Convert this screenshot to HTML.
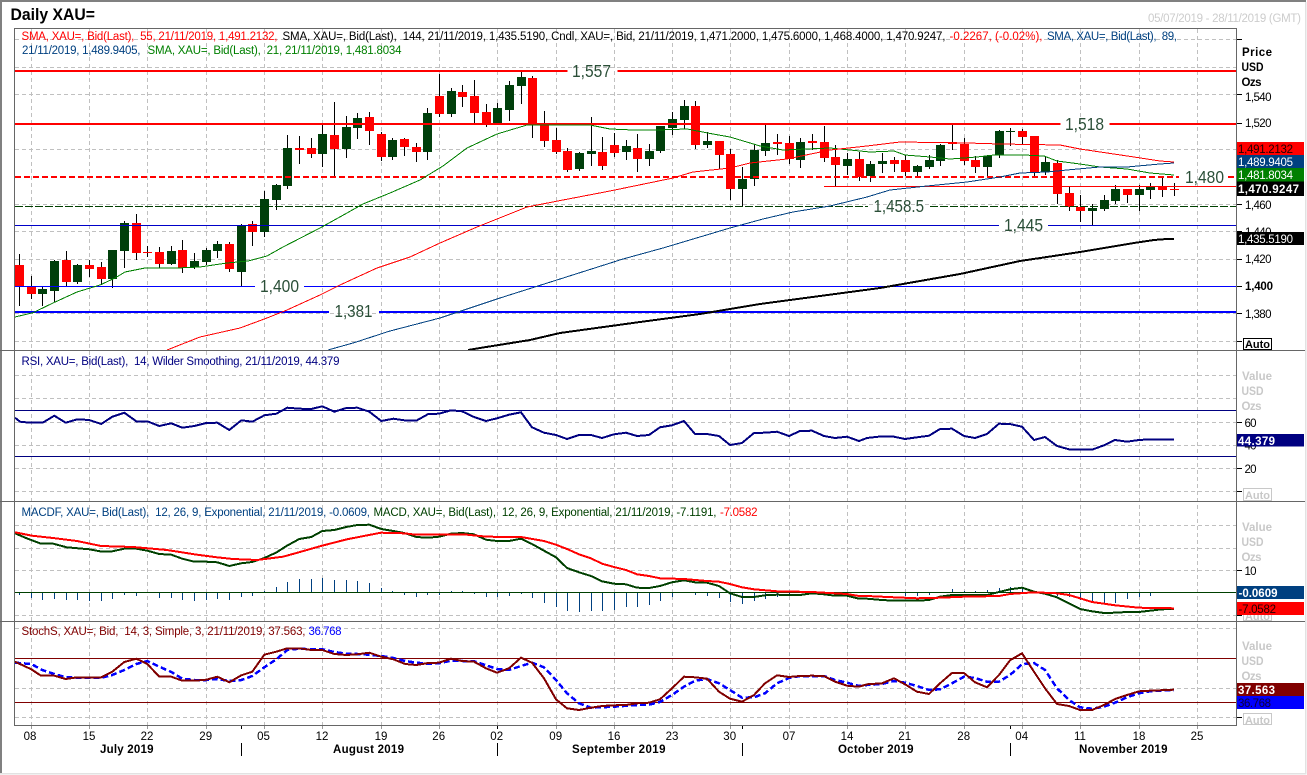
<!DOCTYPE html>
<html><head><meta charset="utf-8"><title>Daily XAU=</title>
<style>
html,body{margin:0;padding:0;background:#fff;width:1307px;height:775px;overflow:hidden}
svg{display:block}
text{font-family:"Liberation Sans",Arial,sans-serif;font-size:11.5px;white-space:pre}
.b{font-weight:bold}
.g{fill:#c8c8c8;font-weight:bold;font-size:11.5px}
.l{font-size:17.5px;fill:#2b4f38}
.p{fill:none;shape-rendering:crispEdges}
.pl{fill:none;stroke-linejoin:round}
</style></head><body>
<svg xmlns="http://www.w3.org/2000/svg" width="1307" height="775" viewBox="0 0 1307 775">
<defs><clipPath id="c"><rect x="15" y="29" width="1221" height="321"/></clipPath></defs>
<rect width="1307" height="775" fill="#fff"/>
<!-- outer frame -->
<path class="p" stroke="#808080" stroke-width="2" d="M0 1H1306M1 0V773"/>
<path class="p" stroke="#e2e2e2" stroke-width="1.5" d="M1305.5 2V773.5H0"/>
<text x="10.5" y="20" class="b" style="font-size:16.5px" textLength="84.5" lengthAdjust="spacingAndGlyphs" fill="#000">Daily XAU=</text>
<text x="1148" y="22" fill="#cccccc" textLength="153">05/07/2019 - 28/11/2019 (GMT)</text>
<!-- grid -->
<path class="p" stroke="#c0c0c0" stroke-dasharray="4 3" d="M31.5 29V725M89.5 29V725M147.5 29V725M206.5 29V725M264.5 29V725M322.5 29V725M381.5 29V725M439.5 29V725M497.5 29V725M556.5 29V725M614.5 29V725M672.5 29V725M730.5 29V725M789.5 29V725M847.5 29V725M905.5 29V725M964.5 29V725M1022.5 29V725M1080.5 29V725M1139.5 29V725M1197.5 29V725"/>
<path class="p" stroke="#c0c0c0" stroke-dasharray="4 3" d="M15 39.5H1236M15 67.5H1236M15 94.5H1236M15 149.5H1236M15 204.5H1236M15 231.5H1236M15 259.5H1236M15 313.5H1236M15 341.5H1236M15 375.5H1236M15 398.5H1236M15 422.5H1236M15 445.5H1236M15 468.5H1236M15 491.5H1236M15 525.5H1236M15 548.5H1236M15 570.5H1236M15 615.5H1236M15 628.5H1236M15 688.5H1236M15 717.5H1236"/>
<!-- candles -->
<g clip-path="url(#c)">
<path class="p" stroke="#000" d="M19.5 254V306M31.5 276V299M42.5 287V306M54.5 260V302M66.5 251V286M77.5 264V284M89.5 260V277M101.5 262V285M112.5 250V288M124.5 221V268M136.5 214V260M147.5 246V257M159.5 247V268M171.5 246V265M182.5 240V273M194.5 253V269M206.5 248V265M217.5 241V258M229.5 242V272M241.5 224V286M252.5 221V246M264.5 191V237M276.5 184V210M287.5 135V189M299.5 136V164M311.5 138V158M322.5 125V167M334.5 102V176M346.5 116V158M357.5 113V139M369.5 112V145M381.5 132V161M392.5 138V160M404.5 138V156M416.5 143V162M427.5 108V160M439.5 74V117M451.5 88V117M462.5 85V107M474.5 80V123M486.5 104V127M497.5 103V124M509.5 81V121M521.5 72V104M532.5 76V138M544.5 111V147M556.5 128V154M567.5 148V172M579.5 152V171M591.5 117V166M602.5 137V170M614.5 133V157M626.5 140V160M637.5 134V172M649.5 144V166M660.5 126V153M672.5 112V135M684.5 100V129M695.5 101V149M707.5 132V148M719.5 141V169M730.5 149V200M742.5 167V206M754.5 144V186M765.5 124V156M777.5 134V155M789.5 136V164M800.5 138V168M812.5 134V150M824.5 126V162M835.5 145V186M847.5 153V175M859.5 152V181M870.5 161V182M882.5 153V173M894.5 157V172M905.5 155V176M917.5 165V177M929.5 155V169M940.5 144V166M952.5 124V150M964.5 138V165M975.5 156V173M987.5 155V176M999.5 130V158M1010.5 128V146M1022.5 129V145M1034.5 136V178M1045.5 157V175M1057.5 160V204M1069.5 187V211M1080.5 195V222M1092.5 204V225M1104.5 195V211M1115.5 185V204M1127.5 189V203M1139.5 185V211M1150.5 183V199M1162.5 177V197M1174.5 183V196"/>
<path class="p" stroke="#ff0000" stroke-width="9" d="M19.5 265V287M31.5 287V294M66.5 260V282M89.5 265V269M101.5 267V279M136.5 223V253M147.5 252V253M159.5 252V264M182.5 250V268M229.5 244V269M252.5 224V232M299.5 148V150M311.5 148V154M334.5 135V149M369.5 117V131M381.5 134V157M404.5 139V147M416.5 147V152M439.5 96V114M462.5 92V97M474.5 96V113M486.5 112V124M532.5 78V125M544.5 123V141M556.5 140V152M567.5 151V170M602.5 152V166M614.5 145V153M637.5 148V159M695.5 106V145M719.5 141V155M730.5 154V189M777.5 142V144M789.5 143V159M812.5 141V143M824.5 142V158M835.5 157V165M859.5 159V177M894.5 160V164M905.5 160V172M952.5 142V144M964.5 144V161M975.5 160V167M1022.5 131V137M1034.5 136V172M1057.5 163V194M1069.5 193V207M1080.5 207V211M1127.5 189V195M1162.5 186V190M1174.5 189V190"/>
<path class="p" stroke="#003f0b" stroke-width="9" d="M42.5 289V294M54.5 261V291M77.5 265V282M112.5 250V279M124.5 223V251M171.5 251V264M194.5 261V267M206.5 250V262M217.5 244V251M241.5 225V272M264.5 199V232M276.5 185V200M287.5 148V186M322.5 134V154M346.5 127V149M357.5 118V128M392.5 140V157M427.5 113V152M451.5 91V114M497.5 108V124M509.5 85V110M521.5 77V86M579.5 153V169M591.5 151V154M626.5 146V152M649.5 151V159M660.5 126V151M672.5 119V128M684.5 106V120M707.5 141V145M742.5 179V189M754.5 150V179M765.5 143V151M800.5 142V160M847.5 159V166M870.5 164V176M882.5 161V164M917.5 166V172M929.5 160V167M940.5 145V161M987.5 156V167M999.5 131V155M1010.5 131V132M1045.5 162V172M1092.5 208V211M1104.5 200V209M1115.5 189V201M1139.5 189V195M1150.5 187V190"/>
</g>
<!-- horizontal levels -->
<path class="p" stroke="#ff0000" stroke-width="2" d="M15 71H567.5M617.5 71H1236M15 124H1060.5M1109.5 124H1236"/>
<path class="p" stroke="#ff0000" stroke-width="2" stroke-dasharray="6 3" d="M15 177H1179M1228 177H1236"/>
<path class="p" stroke="#ff0000" d="M824 186.5H1236"/>
<path class="p" stroke="#004000" stroke-dasharray="8 2" d="M15 206.5H868M930 206.5H1236"/>
<path class="p" stroke="#0000c8" d="M15 225.5H999M1048 225.5H1236"/>
<path class="p" stroke="#0000ff" d="M15 286.5H255M304 286.5H1236"/>
<path class="p" stroke="#0000ff" stroke-width="2" d="M15 312H329M379 312H1236"/>
<text class="l" x="572" y="77" textLength="39" lengthAdjust="spacingAndGlyphs">1,557</text>
<text class="l" x="1065" y="130" textLength="39" lengthAdjust="spacingAndGlyphs">1,518</text>
<text class="l" x="1185" y="183" textLength="39" lengthAdjust="spacingAndGlyphs">1,480</text>
<text class="l" x="873.5" y="212" textLength="50.5" lengthAdjust="spacingAndGlyphs">1,458.5</text>
<text class="l" x="1004" y="231" textLength="39" lengthAdjust="spacingAndGlyphs">1,445</text>
<text class="l" x="260" y="292" textLength="39" lengthAdjust="spacingAndGlyphs">1,400</text>
<text class="l" x="334.5" y="317" textLength="38" lengthAdjust="spacingAndGlyphs">1,381</text>
<!-- SMAs -->
<g clip-path="url(#c)">
<polyline class="p" stroke="#008000" points="15,317 33,312.7 53,303 77,292 100,285 115,278 125,272 145,268 177,268 200,267 227,263 248,261 267,256 283,247 320,228 347,213 363,204 390,193 420,180 443,166 467,148 497,134 527,125 565,125 590,125 610,129 633,130 657,130 687,129 713,134 730,137 760,146 783,150 807,149 830,148 850,150 870,152 894,151 905,155 930,157 950,159 977,157 994,155 1024,155 1044,156 1057,161 1080,164 1100,167 1127,169 1150,173 1174,175"/>
<polyline class="p" stroke="#ff0000" points="167,350 200,337 240,328 267,318 287,310 320,295 340,285 377,268 410,257 440,243 477,227 527,207 563,200 610,191 673,178 693,172 730,168 750,163 787,159 830,150 867,146 900,142 967,143 1000,144 1060,145 1080,149 1134,157 1160,161 1174,162"/>
<polyline class="p" stroke="#004080" points="328,350 353,343 390,331 440,318 500,298 560,279 623,259 663,248 730,228 763,219 793,212 830,206 867,197 890,190 927,186 967,182 1000,177 1020,173 1047,172 1067,170 1100,167 1127,167 1160,164 1174,163"/>
<polyline class="p" stroke="#000" stroke-width="2" points="468,350 480,348 530,340 560,333 640,322 700,314 760,304 820,296 880,288 960,274 1020,261 1047,257 1080,252 1134,243 1154,240 1167,239 1174,239"/>
</g>
<!-- RSI -->
<path class="p" stroke="#000080" d="M15 410.5H1236M15 456.5H1236"/>
<polyline class="p" stroke="#000080" stroke-width="2" points="15,417.7 20,421.7 30,422.7 42.7,422.7 54.3,415.7 65.7,422.7 77.3,419.3 89.3,420 101.3,424 112.3,416.7 124.3,412.7 136.3,421.3 147.3,421.3 159.3,426 171.3,423.3 182.3,427.7 194.3,426 206.3,423 217.3,422.7 229.3,430 241.3,420.3 252.3,421.7 264.3,415.3 276.3,413.7 287.3,407.7 299.3,408.7 311.3,409 322.3,406.3 334.3,411.7 346.3,408 357.3,407.7 369.3,411.7 381.3,421 393.3,418.7 404.3,420.3 416.3,420.7 428.3,414 439,413.7 451,410.3 462,411.3 474,417 486,421 497,418.3 509,414.7 521,412.3 532,427.3 544,432.7 556,435 567,439 579,435 591,435 602,438 614,434.3 626,432.7 637,436 649,435 660,427.3 672,425.3 684,421 695,434 707,434 719,436 730,445 742,443 754,433 765,432.7 777,431.7 789,436 800,431 812,430.7 824,436 835,438 847,436.7 859,441 867,438 882,436.3 894,436.7 905,439 917,437.3 929,435.7 940,429 952,428.7 964,436 975,438 987,434 999,423.7 1010,424 1022,426.7 1034,440 1045,437 1057,446 1069,449.3 1080,449.7 1092,449.7 1104,445.3 1115,440 1127,441.7 1139,440 1150,439.3 1174,439.7"/>
<!-- MACD -->
<path class="p" stroke="#004080" d="M19.5 592.5V595M31.5 592.5V598M42.5 592.5V600M54.5 592.5V599M66.5 592.5V600M77.5 592.5V600M89.5 592.5V601M101.5 592.5V601M112.5 592.5V599M124.5 592.5V595M136.5 592.5V596M147.5 592.5V593M159.5 592.5V598M171.5 592.5V598M182.5 592.5V600M194.5 592.5V601M206.5 592.5V600M217.5 592.5V599M229.5 592.5V600M241.5 592.5V597M252.5 592.5V596M264.5 592.5V591M276.5 592.5V587M287.5 592.5V582M299.5 592.5V579M311.5 592.5V579M322.5 592.5V578M334.5 592.5V580M346.5 592.5V580M357.5 592.5V581M369.5 592.5V583M381.5 592.5V588M392.5 592.5V591M404.5 592.5V595M416.5 592.5V597M427.5 592.5V595M439.5 592.5V595M451.5 592.5V591M462.5 592.5V591M474.5 592.5V594M486.5 592.5V597M497.5 592.5V597M509.5 592.5V596M521.5 592.5V594M532.5 592.5V598M544.5 592.5V603M556.5 592.5V607M567.5 592.5V611M579.5 592.5V612M591.5 592.5V611M602.5 592.5V611M614.5 592.5V610M626.5 592.5V607M637.5 592.5V607M649.5 592.5V605M660.5 592.5V601M672.5 592.5V597M695.5 592.5V595M707.5 592.5V596M719.5 592.5V598M730.5 592.5V602M742.5 592.5V604M754.5 592.5V601M765.5 592.5V599M777.5 592.5V597M789.5 592.5V596M824.5 592.5V595M847.5 592.5V595M905.5 592.5V596M917.5 592.5V596M929.5 592.5V595M952.5 592.5V589M964.5 592.5V591M975.5 592.5V591M987.5 592.5V590M999.5 592.5V588M1010.5 592.5V587M1022.5 592.5V587M1034.5 592.5V591M1045.5 592.5V593M1057.5 592.5V596M1069.5 592.5V597M1080.5 592.5V600M1092.5 592.5V603M1104.5 592.5V603M1115.5 592.5V603M1127.5 592.5V599M1139.5 592.5V597M1150.5 592.5V596M1162.5 592.5V593"/>
<path class="p" stroke="#004000" d="M15 592.5H1236"/>
<polyline class="p" stroke="#004000" stroke-width="2" points="15,533.3 26.7,538.3 40,543.3 53.3,543.7 66.7,547.3 89.3,549.3 100,551.3 112.3,551.3 124.3,548.7 136.3,548.7 147.3,550.7 159.3,554 171.3,554.7 182.3,558.7 194.3,561.7 206.3,561.7 217.3,562.3 229.3,566 241.3,563.3 252.3,562 264.3,558 276.3,552.5 287.3,545.5 299.3,539 311.3,537 322.3,531 334.3,530 346.3,527 357.3,525 369.3,524.7 381.3,529 393.3,531 404.3,533 416.3,537 428.3,537.7 439,536.7 451,533.7 462,533 474,534.3 486,539.7 497,541 509,541 521,538.7 532,544 544,550.7 556,557.3 567,568 579,572.3 591,576 602,581.3 614,583.7 626,584.3 637,587.7 649,588 660,586 672,582.3 684,580.3 695,582.3 707,582.7 719,586 730,593.3 742,597 754,597 765,595.3 777,594.7 789,595 800,595 812,593.3 824,594.3 835,595.7 847,595.7 859,598.7 867,598.7 882,600 894,600.7 905,600.7 917,600.7 929,600 940,596.7 952,595 964,595 975,595 987,595 999,592 1010,589.3 1022,587.7 1034,591.7 1045,593.7 1057,597.3 1069,603.3 1080,609 1092,611.3 1104,613 1115,612.7 1127,612 1139,612 1150,610.7 1162,609.3 1174,609"/>
<polyline class="p" stroke="#ff0000" stroke-width="2" points="15,532.3 32,535.7 53,538 77,541 101,546 133,547 167,550 197,554.7 217,557.3 233,559 257,560 283,556.7 300,552 322,545.7 347,539.3 369,535 381,532.7 404,533.3 416,534.7 439,534.7 463,534.3 487,536.7 521,537 544,541 556,544.7 567,549 579,554.3 591,558.3 602,563.7 614,567 626,570 637,574.3 649,576 660,578.3 684,579 707,581 719,581.7 730,584 742,587.3 754,589.3 777,591.3 812,592 847,594 859,596 867,596 894,597.3 917,598.3 940,597.7 964,596.7 999,596 1010,594 1034,592.3 1057,593.3 1069,595 1080,598.3 1092,602 1104,603.7 1115,605.3 1139,607.7 1174,608.3"/>
<!-- Stoch -->
<path class="p" stroke="#800000" d="M15 658.5H1236M15 702.5H1236"/>
<polyline class="p" stroke="#0000ff" stroke-width="2.5" stroke-dasharray="6 3" points="15,662.7 31.3,664 42.3,670 54.3,674 66.3,677.3 77.3,677.7 101.3,677.7 112.3,675 124.3,670 136.3,664 147.3,661 159.3,666.7 171.3,672 182.3,678.7 194.3,680 206.3,680 217.3,679 229.3,681 241.3,680 252.3,676 264.3,667.3 276.3,659.3 287.3,650 299.3,648.7 311.3,649.3 322.3,649.3 334.3,652 346.3,653.7 357.3,654 369.3,654.7 381.3,656 393.3,658 405.3,661 416.3,662.7 428.3,663.7 439,663.3 451,660.7 474,661.3 486,665.3 497,669 509,670 521,666 532,662.7 544,667.3 556,680 567,693.3 579,703.3 591,707.7 614,706.7 637,705 649,704.7 660,702 672,695 684,686.7 695,680.7 707,679 719,683.3 730,690 742,697.7 754,697.3 765,693.3 777,683.3 789,678 800,676 824,676 835,680 847,682.7 859,686 867,685 882,684 894,681 905,682.7 917,686 929,690 940,689.3 952,683.3 964,676.7 975,678 987,681.7 999,681.7 1010,675 1022,664.3 1034,663 1045,670 1057,688.3 1069,700 1080,707.3 1092,708.7 1104,706.7 1115,702.7 1127,697.3 1139,693.3 1150,691.3 1174,690"/>
<polyline class="p" stroke="#800000" stroke-width="2" points="15,661.7 31.3,669.3 41,675.7 54.3,675.7 65.7,679 77.3,677.3 101.3,677.3 112.3,671.7 124.3,662 136.3,658.7 147.3,664 159.3,676.7 171.3,676.7 182.3,680.7 194.3,680.7 206.3,679.7 217.3,676.7 229.3,682.3 241.3,675.3 252.3,671.7 264.3,654.7 276.3,651.7 287.3,648.3 299.3,648.3 311.3,650 322.3,650 334.3,654 346.3,655 357.3,654.3 369.3,652.7 381.3,656.7 393.3,659.3 405.3,664 416.3,665 428.3,663 439,662.7 451,658.7 462,661 474,661.7 486,668.3 497,672.7 509,668.3 521,657.7 532,662.7 544,678.3 556,699.3 567,708.3 579,710 591,707.7 602,706 614,705.3 626,705 637,703.3 649,702.7 660,699.3 672,688.3 684,676.7 695,677.3 707,678.7 719,691.7 730,698.7 742,701.7 754,695 765,683.3 777,675.3 789,677 800,676 812,675.7 824,676 835,681.7 847,685.7 859,686.7 867,684.3 882,683.3 894,678.3 905,684.3 917,691.7 929,694 940,683.3 952,673 964,673 975,682.3 987,687.3 999,675 1010,660.3 1022,653.3 1034,671.7 1045,688.3 1057,704 1069,706 1080,710 1092,710 1104,705 1115,699 1127,695 1139,691.3 1150,690.7 1174,689.7"/>
<!-- frame and dividers -->
<path class="p" stroke="#666" d="M14.5 28.5H1236.5V725.5H14.5ZM0 350.5H1305M0 501.5H1305M0 621.5H1305"/>
<!-- legends -->
<text x="21.5" y="40" fill="#ff0000" textLength="256">SMA, XAU=, Bid(Last),  55, 21/11/2019, 1,491.2132,</text>
<text x="282.5" y="40" fill="#000" textLength="663">SMA, XAU=, Bid(Last),  144, 21/11/2019, 1,435.5190, Cndl, XAU=, Bid, 21/11/2019, 1,471.2000, 1,475.6000, 1,468.4000, 1,470.9247,</text>
<text x="949.5" y="40" fill="#ff0000" textLength="93">-0.2267, (-0.02%),</text>
<text x="1047" y="40" fill="#004080" textLength="130">SMA, XAU=, Bid(Last),  89,</text>
<text x="22" y="54" fill="#004080" textLength="118.5">21/11/2019, 1,489.9405,</text>
<text x="147.5" y="54" fill="#008000" textLength="254">SMA, XAU=, Bid(Last),  21, 21/11/2019, 1,481.8034</text>
<text x="21.5" y="365" fill="#000080" textLength="318">RSI, XAU=, Bid(Last),  14, Wilder Smoothing, 21/11/2019, 44.379</text>
<text x="21.5" y="516" fill="#004080" textLength="348.5">MACDF, XAU=, Bid(Last),  12, 26, 9, Exponential, 21/11/2019, -0.0609,</text>
<text x="373.5" y="516" fill="#004000" textLength="343">MACD, XAU=, Bid(Last),  12, 26, 9, Exponential, 21/11/2019, -7.1191,</text>
<text x="720" y="516" fill="#ff0000" textLength="37.5">-7.0582</text>
<text x="21.5" y="635" fill="#800000" textLength="284">StochS, XAU=, Bid,  14, 3, Simple, 3, 21/11/2019, 37.563,</text>
<text x="308.5" y="635" fill="#0000ff" textLength="33">36.768</text>
<!-- right axis ticks -->
<path class="p" stroke="#000" d="M1237 39.5H1242M1237 94.5H1242M1237 123.5H1242M1237 204.5H1242M1237 231.5H1242M1237 259.5H1242M1237 286.5H1242M1237 313.5H1242M1237 341.5H1242M1237 422.5H1242M1237 468.5H1242M1237 491.5H1242M1237 570.5H1242M1237 615.5H1242M1237 717.5H1242"/>
<text x="1242" y="56" class="b" style="font-size:11.5px" textLength="30">Price</text>
<text x="1241.5" y="71" class="b" style="font-size:11.5px" textLength="22" lengthAdjust="spacingAndGlyphs">USD</text>
<text x="1241.5" y="86" class="b" style="font-size:11.5px" textLength="20">Ozs</text>
<text x="1245" y="101" textLength="26.5">1,540</text>
<text x="1245" y="127" textLength="26.5">1,520</text>
<text x="1245" y="209" textLength="26.5">1,460</text>
<text x="1245" y="236" textLength="26.5">1,440</text>
<text x="1245" y="263" textLength="26.5">1,420</text>
<text x="1245" y="290" class="b" textLength="28">1,400</text>
<text x="1245" y="318" textLength="26.5">1,380</text>
<rect x="1243.5" y="338.5" width="28" height="11" fill="#fff" stroke="#000"/>
<text x="1245" y="348" class="b" style="font-size:11px" textLength="25">Auto</text>
<!-- value boxes main -->
<rect x="1237" y="142" width="67" height="13" fill="#ff0000"/><text x="1238" y="153" fill="#200" textLength="55">1,491.2132</text>
<rect x="1237" y="155" width="67" height="13" fill="#004080"/><text x="1238" y="166" fill="#fff" textLength="55">1,489.9405</text>
<rect x="1237" y="168" width="67" height="13.5" fill="#008000"/><text x="1238" y="179" fill="#fff" textLength="55">1,481.8034</text>
<rect x="1237" y="181.5" width="67" height="14.5" fill="#000"/><text x="1238" y="193" fill="#fff" class="b" textLength="61">1,470.9247</text>
<rect x="1237" y="232" width="67" height="13" fill="#000"/><text x="1238" y="243" fill="#fff" textLength="55">1,435.5190</text>
<!-- RSI axis -->
<text class="g" x="1242" y="380" textLength="30">Value</text>
<text class="g" x="1241.5" y="395" textLength="22" lengthAdjust="spacingAndGlyphs">USD</text>
<text class="g" x="1241.5" y="410" textLength="20">Ozs</text>
<text x="1244.5" y="427" textLength="12">60</text>
<text x="1244.5" y="449.5" textLength="12">40</text>
<text x="1244.5" y="473" textLength="12">20</text>
<rect x="1237" y="434" width="67" height="12.5" fill="#000080"/><text x="1238" y="445" fill="#fff" class="b" textLength="37">44.379</text>
<rect x="1243.5" y="488.5" width="28" height="12" fill="#fff" stroke="#c8c8c8"/>
<text class="g" x="1245" y="499" style="font-size:11px" textLength="25">Auto</text>
<!-- MACD axis -->
<text class="g" x="1242" y="531" textLength="30">Value</text>
<text class="g" x="1241.5" y="546" textLength="22" lengthAdjust="spacingAndGlyphs">USD</text>
<text class="g" x="1241.5" y="561" textLength="20">Ozs</text>
<text x="1244.5" y="575" textLength="12">10</text>
<rect x="1243.5" y="609.5" width="28" height="11" fill="#fff" stroke="#c8c8c8"/>
<text class="g" x="1245" y="620" style="font-size:11px" textLength="25">Auto</text>
<rect x="1237" y="586" width="67" height="13" fill="#004080"/><text x="1238.5" y="597" fill="#fff" class="b" textLength="39">-0.0609</text>
<rect x="1237" y="602" width="67" height="13" fill="#ff0000"/><text x="1238.5" y="613" fill="#200" textLength="37.5">-7.0582</text>
<!-- Stoch axis -->
<text class="g" x="1242" y="650" textLength="30">Value</text>
<text class="g" x="1241.5" y="665" textLength="22" lengthAdjust="spacingAndGlyphs">USD</text>
<text class="g" x="1241.5" y="680" textLength="20">Ozs</text>
<rect x="1237" y="683" width="67" height="13" fill="#800000"/><text x="1238" y="694" fill="#fff" class="b" textLength="37">37.563</text>
<rect x="1237" y="696" width="67" height="13" fill="#0000ff"/><text x="1238" y="707" fill="#100038" textLength="33">36.768</text>
<rect x="1243.5" y="713.5" width="28" height="11" fill="#fff" stroke="#c8c8c8"/>
<text class="g" x="1245" y="724" style="font-size:11px" textLength="25">Auto</text>
<!-- x axis -->
<path class="p" stroke="#000" d="M241.5 726V729M497.5 726V729M742.5 726V729M1010.5 726V729M241.5 743V756M497.5 743V756M742.5 743V756M1010.5 743V756"/>
<path class="p" stroke="#999" d="M31.5 726V729M89.5 726V729M147.5 726V729M206.5 726V729M264.5 726V729M322.5 726V729M381.5 726V729M439.5 726V729M556.5 726V729M614.5 726V729M672.5 726V729M730.5 726V729M789.5 726V729M847.5 726V729M905.5 726V729M964.5 726V729M1022.5 726V729M1080.5 726V729M1139.5 726V729M1197.5 726V729"/>
<g fill="#000" text-anchor="middle">
<text x="30" y="740">08</text><text x="89" y="740">15</text><text x="147" y="740">22</text><text x="205.7" y="740">29</text><text x="263.5" y="740">05</text><text x="322" y="740">12</text><text x="381" y="740">19</text><text x="438.7" y="740">26</text><text x="496.7" y="740">02</text><text x="555.7" y="740">09</text><text x="614" y="740">16</text><text x="672" y="740">23</text><text x="729.7" y="740">30</text><text x="789" y="740">07</text><text x="847" y="740">14</text><text x="904.7" y="740">21</text><text x="963.7" y="740">28</text><text x="1021.7" y="740">04</text><text x="1080" y="740">11</text><text x="1139" y="740">18</text><text x="1197" y="740">25</text>
</g>
<g class="b" fill="#000">
<text class="b" x="100" y="753" textLength="53.5">July 2019</text>
<text class="b" x="333" y="753" textLength="71">August 2019</text>
<text class="b" x="572" y="753" textLength="93.5">September 2019</text>
<text class="b" x="838" y="753" textLength="75.5">October 2019</text>
<text class="b" x="1079" y="753" textLength="88.5">November 2019</text>
</g>
</svg>
</body></html>
